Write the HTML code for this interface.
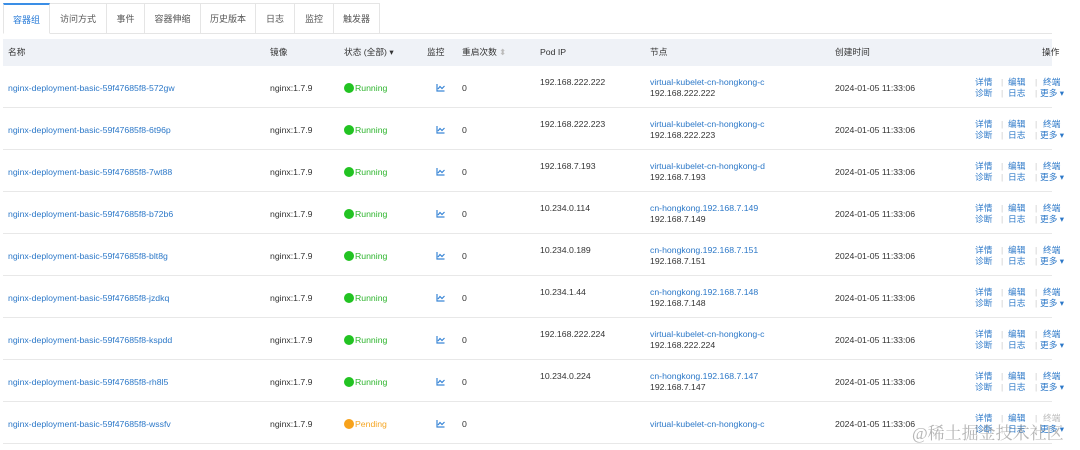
<!DOCTYPE html>
<html><head><meta charset="utf-8"><style>
*{margin:0;padding:0;box-sizing:border-box}
body{width:1080px;height:450px;background:#fff;font-family:"Liberation Sans","Noto Sans CJK SC",sans-serif;font-size:8.7px;color:#333;position:relative;overflow:hidden}
.a{position:absolute;white-space:nowrap;line-height:10px}
.tabs{position:absolute;left:3px;top:3px;height:31px;display:flex;border-bottom:1px solid #e5e5e5;width:1049px}
.tab{height:31px;border:1px solid #e5e5e5;border-left:none;line-height:30px;text-align:center;font-size:9px;color:#555;background:#fff}
.tab.act{border-left:1px solid #e5e5e5;border-top:2px solid #3a8ee6;color:#2a7cd8;border-bottom:1px solid #fff}
.hdr{position:absolute;left:3px;top:39px;width:1049px;height:27px;background:#eff2f7}
.row{position:absolute;left:3px;width:1049px;height:42px;border-bottom:1px solid #e8e8e8}
.lk{color:#2c78c8}
.dot{display:inline-block;width:10px;height:10px;border-radius:50%;vertical-align:-2px;margin-right:1px}
.sep{color:#ccc}
</style></head><body>
<div class="tabs">
<div class="tab act" style="width:47px">容器组</div>
<div class="tab" style="width:57px">访问方式</div>
<div class="tab" style="width:38px">事件</div>
<div class="tab" style="width:56px">容器伸缩</div>
<div class="tab" style="width:55px">历史版本</div>
<div class="tab" style="width:39px">日志</div>
<div class="tab" style="width:39px">监控</div>
<div class="tab" style="width:46px">触发器</div>
</div>
<div class="hdr"></div>
<div class="a" style="left:8px;top:47px">名称</div>
<div class="a" style="left:270px;top:47px">镜像</div>
<div class="a" style="left:344px;top:47px">状态 (全部) ▾</div>
<div class="a" style="left:427px;top:47px">监控</div>
<div class="a" style="left:462px;top:47px">重启次数 <span style="color:#bbb">⬍</span></div>
<div class="a" style="left:540px;top:47px">Pod IP</div>
<div class="a" style="left:650px;top:47px">节点</div>
<div class="a" style="left:835px;top:47px">创建时间</div>
<div class="a" style="left:1042px;top:47px">操作</div>
<div id="rows"></div>
<script>
var d=[["572gw","192.168.222.222","virtual-kubelet-cn-hongkong-c","192.168.222.222"],
["6t96p","192.168.222.223","virtual-kubelet-cn-hongkong-c","192.168.222.223"],
["7wt88","192.168.7.193","virtual-kubelet-cn-hongkong-d","192.168.7.193"],
["b72b6","10.234.0.114","cn-hongkong.192.168.7.149","192.168.7.149"],
["blt8g","10.234.0.189","cn-hongkong.192.168.7.151","192.168.7.151"],
["jzdkq","10.234.1.44","cn-hongkong.192.168.7.148","192.168.7.148"],
["kspdd","192.168.222.224","virtual-kubelet-cn-hongkong-c","192.168.222.224"],
["rh8l5","10.234.0.224","cn-hongkong.192.168.7.147","192.168.7.147"],
["wssfv","","virtual-kubelet-cn-hongkong-c",""]];
var h="";
function at(x,y,s,cls,st){return '<div class="a '+(cls||'')+'" style="left:'+x+'px;top:'+y+'px;'+(st||'')+'">'+s+'</div>';}
d.forEach(function(r,i){var t=66+42*i,c=t+17,p=i==8,y1=t+11,y2=t+22;
h+='<div class="row" style="top:'+t+'px"></div>';
h+=at(8,c,'nginx-deployment-basic-59f47685f8-'+r[0],'lk');
h+=at(270,c,'nginx:1.7.9');
h+='<div class="a" style="left:344px;top:'+(c-1)+'px;line-height:12px;color:'+(p?'#f5a623':'#2db52d')+'"><span class="dot" style="background:'+(p?'#f7a21b':'#22c322')+'"></span>'+(p?'Pending':'Running')+'</div>';
h+='<svg class="a" style="left:436px;top:'+(c+1)+'px" width="9" height="8" viewBox="0 0 9 8"><path d="M1 0V7H8.5M2 5L4 2.5 6 4.5 8.5 2" fill="none" stroke="#3a86d6" stroke-width="1.2"/></svg>';
h+=at(462,c,'0');
if(r[1])h+=at(540,y1,r[1]);
if(r[3]){h+=at(650,y1,r[2],'lk')+at(650,y2,r[3]);}
else h+=at(650,c,r[2],'lk');
h+=at(835,c,'2024-01-05 11:33:06');
h+=at(975,y1,'详情','lk')+at(1001,y1,'|','sep')+at(1008,y1,'编辑','lk')+at(1035,y1,'|','sep')+at(1043,y1,'终端','lk',p?'color:#bbb':'');
h+=at(975,y2,'诊断','lk')+at(1001,y2,'|','sep')+at(1008,y2,'日志','lk')+at(1035,y2,'|','sep')+at(1040,y2,'更多 ▾','lk');
});
document.getElementById("rows").innerHTML=h;
</script>
<div class="a" style="left:912px;top:424px;font-size:17px;line-height:20px;color:rgba(120,120,120,0.55);font-family:'Liberation Serif','Noto Serif CJK SC',serif">@稀土掘金技术社区</div>
</body></html>
